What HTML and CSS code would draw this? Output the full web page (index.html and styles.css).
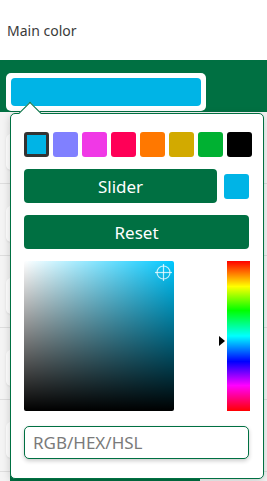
FILE: index.html
```html
<!DOCTYPE html>
<html lang="en">
<head>
    <meta charset="UTF-8">
    <meta name="viewport" content="width=device-width, initial-scale=1.0">
    <title>Main color</title>
    <link rel="stylesheet" href="styles.css">
</head>
<body>

<div class="field-label">Main color</div>

<!-- Color field with preview -->
<div class="band">
    <div class="preview">
        <div class="preview-color"></div>
    </div>
</div>

<!-- Rows behind the picker -->
<div class="rows">
    <div class="row"><div class="card"></div></div>
    <div class="row"><div class="card"></div></div>
    <div class="row"><div class="card"></div></div>
    <div class="row"><div class="card"></div></div>
    <div class="row"><div class="card"></div></div>
    <div class="save-bar"></div>
</div>

<!-- Picker popup -->
<div class="picker">
    <div class="picker-arrow"></div>

    <div class="swatches">
        <div class="swatch active" style="background-color: #00b4e6;"></div>
        <div class="swatch" style="background-color: #8080ff;"></div>
        <div class="swatch" style="background-color: #f038e6;"></div>
        <div class="swatch" style="background-color: #ff0057;"></div>
        <div class="swatch" style="background-color: #ff7800;"></div>
        <div class="swatch" style="background-color: #d2aa00;"></div>
        <div class="swatch" style="background-color: #00b132;"></div>
        <div class="swatch" style="background-color: #000000;"></div>
    </div>

    <div class="slider-row">
        <button class="btn slider-btn">Slider</button>
        <div class="current"></div>
    </div>

    <button class="btn reset-btn">Reset</button>

    <div class="spectrum">
        <div class="sat-area">
            <div class="crosshair">
                <svg width="19" height="19" viewBox="0 0 19 19">
                    <circle cx="9.5" cy="9.5" r="6.5" fill="none" stroke="rgba(255,255,255,0.75)" stroke-width="1.2"/>
                    <line x1="9.5" y1="1" x2="9.5" y2="18" stroke="rgba(255,255,255,0.75)" stroke-width="1.2"/>
                    <line x1="1" y1="9.5" x2="18" y2="9.5" stroke="rgba(255,255,255,0.75)" stroke-width="1.2"/>
                </svg>
            </div>
        </div>
        <div class="hue-wrap">
            <div class="hue-pointer"></div>
            <div class="hue-bar"></div>
        </div>
    </div>

    <input class="color-input" type="text" placeholder="RGB/HEX/HSL">
</div>

</body>
</html>
```

FILE: styles.css
```css
body {
    margin: 0;
    height: 481px;
    background-color: #ffffff;
    font-family: "Noto Sans", "Open Sans", sans-serif;
    color: #333;
    position: relative;
    overflow: hidden;
}

.field-label {
    height: 60px;
    padding-left: 7px;
    font-size: 14px;
    line-height: 62px;
    color: #3a3a3a;
}

.band {
    height: 52px;
    background-color: #007042; /* Brand green */
    padding: 13px 0 0 6px;
    box-sizing: border-box;
}

.preview {
    width: 200px;
    height: 38px;
    padding: 5px;
    box-sizing: border-box;
    background-color: #fff;
    border-radius: 5px;
}

.preview-color {
    height: 100%;
    background-color: #00b4e6;
    border-radius: 4px;
}

.rows {
    background-color: #f4f4f4;
}

.row {
    height: 72px;
    border-bottom: 1px solid #dedede;
    padding-top: 22px;
    box-sizing: border-box;
}

.card {
    margin-left: 6px;
    width: 240px;
    height: 36px;
    background-color: #fff;
    border-radius: 5px;
    box-shadow: 0 1px 2px rgba(0, 0, 0, 0.08);
}

.save-bar {
    margin-left: 10px;
    width: 190px;
    height: 9px;
    background-color: #007042;
}

/* Picker popup */
.picker {
    position: absolute;
    top: 113px;
    left: 10px;
    width: 254px;
    height: 366px;
    box-sizing: border-box;
    padding: 18px 14px 0 13px;
    background-color: #fff;
    border: 1px solid #007042;
    border-radius: 5px;
    box-shadow: 0 2px 8px rgba(0, 0, 0, 0.18);
}

.picker-arrow {
    position: absolute;
    top: -9px;
    left: 11px;
    width: 15px;
    height: 15px;
    background-color: #fff;
    border-top: 1px solid #007042;
    border-left: 1px solid #007042;
    transform: rotate(45deg);
}

.swatches {
    display: grid;
    grid-template-columns: repeat(8, 25px);
    gap: 4px;
}

.swatch {
    width: 25px;
    height: 25px;
    border-radius: 3px;
    box-sizing: border-box;
}

.swatch.active {
    border: 3px solid #333;
}

.slider-row {
    display: flex;
    align-items: center;
    gap: 7px;
    margin-top: 12px;
}

.btn {
    height: 34px;
    border: none;
    border-radius: 4px;
    background-color: #007042;
    color: #fff;
    font-family: "Noto Sans", "Open Sans", sans-serif;
    font-size: 17px;
    padding: 0;
    cursor: pointer;
}

.slider-btn {
    width: 193px;
}

.current {
    width: 25px;
    height: 25px;
    border-radius: 3px;
    background-color: #00b4e6;
}

.reset-btn {
    display: block;
    width: 225px;
    margin-top: 12px;
}

.spectrum {
    display: flex;
    justify-content: space-between;
    margin-top: 12px;
    height: 150px;
}

.sat-area {
    position: relative;
    width: 150px;
    height: 150px;
    border-radius: 2px;
    background:
        linear-gradient(to top, #000, rgba(0, 0, 0, 0)),
        linear-gradient(to right, #fff, rgba(255, 255, 255, 0)),
        hsl(193, 100%, 50%);
}

.crosshair {
    position: absolute;
    top: 2px;
    left: 130px;
    width: 19px;
    height: 19px;
}

.hue-wrap {
    position: relative;
    width: 23px;
    margin-right: -1px;
}

.hue-bar {
    width: 23px;
    height: 150px;
    background: linear-gradient(to bottom, #f00 0%, #ff0 17%, #0f0 33%, #0ff 50%, #00f 67%, #f0f 83%, #f00 100%);
}

.hue-pointer {
    position: absolute;
    top: 75px;
    left: -8px;
    width: 0;
    height: 0;
    border-top: 5px solid transparent;
    border-bottom: 5px solid transparent;
    border-left: 6px solid #000;
}

.color-input {
    display: block;
    width: 225px;
    height: 33px;
    margin-top: 15px;
    box-sizing: border-box;
    border: 1px solid #007042;
    border-radius: 5px;
    padding: 0 8px;
    font-family: "Noto Sans", "Open Sans", sans-serif;
    font-size: 17px;
    box-shadow: 0 2px 4px rgba(0, 0, 0, 0.2);
    outline: none;
}

.color-input::placeholder {
    color: #7a7a7a;
}
```
